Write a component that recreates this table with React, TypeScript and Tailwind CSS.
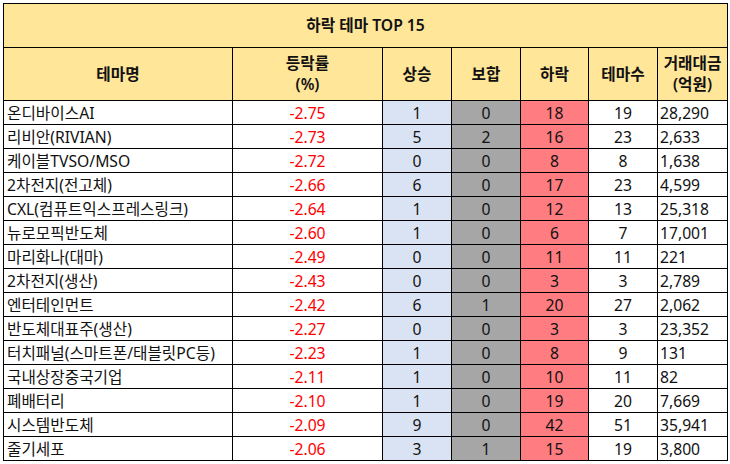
import React from "react";

type Row = {
  name: string;
  rate: string;
  up: number;
  flat: number;
  down: number;
  count: number;
  amount: string;
};

const rows: Row[] = [
  { name: "온디바이스AI", rate: "-2.75", up: 1, flat: 0, down: 18, count: 19, amount: "28,290" },
  { name: "리비안(RIVIAN)", rate: "-2.73", up: 5, flat: 2, down: 16, count: 23, amount: "2,633" },
  { name: "케이블TVSO/MSO", rate: "-2.72", up: 0, flat: 0, down: 8, count: 8, amount: "1,638" },
  { name: "2차전지(전고체)", rate: "-2.66", up: 6, flat: 0, down: 17, count: 23, amount: "4,599" },
  { name: "CXL(컴퓨트익스프레스링크)", rate: "-2.64", up: 1, flat: 0, down: 12, count: 13, amount: "25,318" },
  { name: "뉴로모픽반도체", rate: "-2.60", up: 1, flat: 0, down: 6, count: 7, amount: "17,001" },
  { name: "마리화나(대마)", rate: "-2.49", up: 0, flat: 0, down: 11, count: 11, amount: "221" },
  { name: "2차전지(생산)", rate: "-2.43", up: 0, flat: 0, down: 3, count: 3, amount: "2,789" },
  { name: "엔터테인먼트", rate: "-2.42", up: 6, flat: 1, down: 20, count: 27, amount: "2,062" },
  { name: "반도체대표주(생산)", rate: "-2.27", up: 0, flat: 0, down: 3, count: 3, amount: "23,352" },
  { name: "터치패널(스마트폰/태블릿PC등)", rate: "-2.23", up: 1, flat: 0, down: 8, count: 9, amount: "131" },
  { name: "국내상장중국기업", rate: "-2.11", up: 1, flat: 0, down: 10, count: 11, amount: "82" },
  { name: "폐배터리", rate: "-2.10", up: 1, flat: 0, down: 19, count: 20, amount: "7,669" },
  { name: "시스템반도체", rate: "-2.09", up: 9, flat: 0, down: 42, count: 51, amount: "35,941" },
  { name: "줄기세포", rate: "-2.06", up: 3, flat: 1, down: 15, count: 19, amount: "3,800" },
];

const th = "border border-black bg-[#ffe699] font-semibold text-center align-middle leading-[21px]";
const td = "border border-black h-[24px] p-0 align-middle leading-[22px]";

export default function App() {
  return (
    <div className="w-[730px] h-[464px] bg-white pt-[3px] pl-[3px] font-['Noto_Sans','Noto_Sans_CJK_KR',sans-serif] text-[15.7px] text-[#111]">
      <table className="table-fixed border-collapse w-[724px]">
        <colgroup>
          <col className="w-[229px]" />
          <col className="w-[150px]" />
          <col className="w-[69px]" />
          <col className="w-[69px]" />
          <col className="w-[68px]" />
          <col className="w-[69px]" />
          <col className="w-[70px]" />
        </colgroup>
        <thead>
          <tr className="h-[44px]">
            <th colSpan={7} className={th}>
              하락 테마 TOP 15
            </th>
          </tr>
          <tr className="h-[53px]">
            <th className={th}>테마명</th>
            <th className={th}>
              등락률
              <br />
              (%)
            </th>
            <th className={th}>상승</th>
            <th className={th}>보합</th>
            <th className={th}>하락</th>
            <th className={th}>테마수</th>
            <th className={th}>
              거래대금
              <br />
              (억원)
            </th>
          </tr>
        </thead>
        <tbody>
          {rows.map((r) => (
            <tr key={r.name} className="h-[24px]">
              <td className={`${td} pl-[3px] text-left whitespace-nowrap overflow-hidden`}>{r.name}</td>
              <td className={`${td} text-center text-[#ff0000]`}>{r.rate}</td>
              <td className={`${td} text-center bg-[#dae3f3]`}>{r.up}</td>
              <td className={`${td} text-center bg-[#a6a6a6]`}>{r.flat}</td>
              <td className={`${td} text-center bg-[#ff7c80]`}>{r.down}</td>
              <td className={`${td} text-center`}>{r.count}</td>
              <td className={`${td} pl-[2px] text-left`}>{r.amount}</td>
            </tr>
          ))}
        </tbody>
      </table>
    </div>
  );
}
